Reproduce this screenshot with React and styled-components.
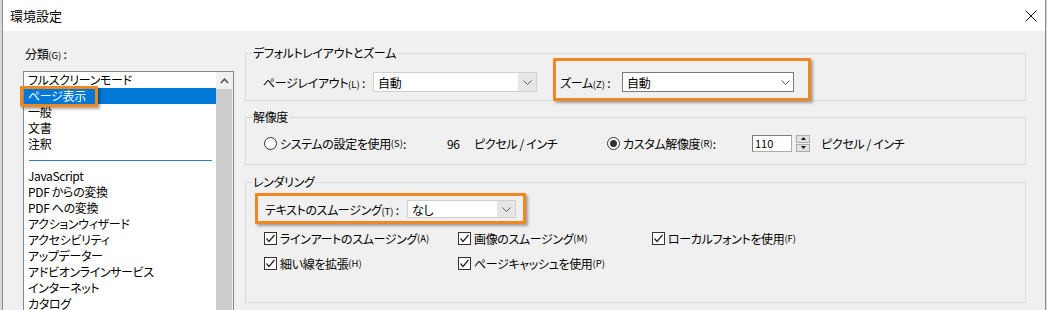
import React from 'react';
import styled, { createGlobalStyle } from 'styled-components';

const GlobalStyle = createGlobalStyle`
  *, *::before, *::after { box-sizing: border-box; }
  html, body { margin: 0; padding: 0; background: #d8d8d8; }
  body {
    font-family: "Noto Sans CJK JP", "Noto Sans", sans-serif;
    font-size: 12px;
    letter-spacing: -0.35px;
    color: #000;
    font-feature-settings: "palt";
  }
  #root { width: 1047px; height: 310px; overflow: hidden; }
`;

const Window = styled.div`
  margin-left: 2px;
  width: 1044px;
  height: 310px;
  border-left: 1px solid #8a8a8a;
  border-right: 1px solid #8a8a8a;
  display: flex;
  flex-direction: column;
  background: #f0f0f0;
  overflow: hidden;
`;

const TitleBar = styled.div`
  height: 31px;
  flex: none;
  background: #fff;
  display: flex;
  align-items: center;
  justify-content: space-between;
  padding: 0 8px 0 7px;
  font-size: 13px;
  letter-spacing: 0;
`;

const Body = styled.div`
  flex: 1;
  display: flex;
  min-height: 0;
`;

const Sidebar = styled.div`
  width: 242px;
  flex: none;
  padding: 15px 0 0 20px;
  display: flex;
  flex-direction: column;
`;

const Mn = styled.span`
  font-size: 9.5px;
  letter-spacing: 0;
`;

const SideLabel = styled.div`
  line-height: 16px;
  padding-left: 2px;
  margin-bottom: 8px;
`;

const ListBox = styled.div`
  width: 211px;
  flex: 1;
  display: flex;
  border: 1px solid #828790;
  border-bottom: none;
  background: #fff;
`;

const Items = styled.div`
  flex: 1;
  display: flex;
  flex-direction: column;
`;

const Item = styled.div`
  height: 16px;
  line-height: 16px;
  padding-left: 4px;
  white-space: nowrap;
  background: ${(p) => (p.$selected ? '#0078d7' : 'transparent')};
  color: ${(p) => (p.$selected ? '#fff' : '#000')};
`;

const Separator = styled.div`
  height: 16px;
  padding-top: 8px;
  margin: 0 4px 0 5px;
  &::after {
    content: '';
    display: block;
    height: 1px;
    background: #2b7bc0;
  }
`;

const ScrollBar = styled.div`
  width: 17px;
  flex: none;
  display: flex;
  flex-direction: column;
  background: #f0f0f0;
`;

const ScrollButton = styled.div`
  height: 17px;
  display: flex;
  align-items: center;
  justify-content: center;
`;

const Thumb = styled.div`
  flex: 1;
  margin: 0 1px 0 0;
  background: #cdcdcd;
`;

const Main = styled.div`
  flex: 1;
  padding: 14px 19px 0 0;
  display: flex;
  flex-direction: column;
`;

const Group = styled.fieldset`
  margin: ${(p) => p.$gap || 0}px 0 0 0;
  padding: 0;
  border: 1px solid #d9d9d9;
  min-width: 0;
`;

const Legend = styled.legend`
  margin-left: 6px;
  padding: 0 1px;
  line-height: 16px;
`;

const GroupContent = styled.div`
  padding: ${(p) => p.$pad};
  display: flex;
  flex-direction: column;
`;

const Row = styled.div`
  display: flex;
  align-items: center;
  height: ${(p) => p.$h || 20}px;
  white-space: nowrap;
`;

const Label = styled.span`
  width: ${(p) => (p.$w ? `${p.$w}px` : 'auto')};
  margin-left: ${(p) => p.$ml || 0}px;
  flex: none;
  white-space: nowrap;
`;

const Highlight = styled.div`
  position: relative;
  display: flex;
  align-items: center;
  margin-left: ${(p) => p.$ml || 0}px;
  &::after {
    content: '';
    position: absolute;
    top: ${(p) => p.$t}px;
    left: ${(p) => p.$l}px;
    right: ${(p) => p.$r}px;
    bottom: ${(p) => p.$b}px;
    border: 3px solid #ef8820;
    border-radius: 1px;
    box-shadow: 2px 2px 3px rgba(0, 0, 0, 0.35);
    pointer-events: none;
  }
`;

const InlineHighlight = styled.span`
  position: relative;
  display: inline-block;
  &::after {
    content: '';
    position: absolute;
    top: -2px;
    left: -8px;
    right: -12px;
    bottom: -3px;
    border: 3px solid #ef8820;
    border-radius: 1px;
    box-shadow: 2px 2px 3px rgba(0, 0, 0, 0.35);
  }
`;

const Select = styled.div`
  width: ${(p) => p.$w}px;
  height: ${(p) => p.$h || 20}px;
  flex: none;
  display: flex;
  background: #fff;
  border: 1px solid ${(p) => (p.$editable ? '#d0d0d0' : '#7a7a7a')};
`;

const SelectText = styled.div`
  flex: 1;
  padding-left: 4px;
  display: flex;
  align-items: center;
`;

const SelectArrow = styled.div`
  width: ${(p) => (p.$editable ? 18 : 16)}px;
  flex: none;
  display: flex;
  align-items: center;
  justify-content: center;
  background: ${(p) => (p.$editable ? '#e6e6e6' : '#fff')};
`;

const Radio = styled.span`
  width: 13px;
  height: 13px;
  flex: none;
  border-radius: 50%;
  border: 1px solid #333;
  background: #fff;
  display: flex;
  align-items: center;
  justify-content: center;
  margin-right: 3px;
  &::after {
    content: '';
    width: 7px;
    height: 7px;
    border-radius: 50%;
    background: ${(p) => (p.$checked ? '#333' : 'transparent')};
  }
`;

const Option = styled.div`
  display: flex;
  align-items: center;
  width: ${(p) => p.$w}px;
  flex: none;
`;

const NumberInput = styled.div`
  width: 40px;
  height: 17px;
  flex: none;
  background: #fff;
  border: 1px solid #adadad;
  border-top-color: #7a7a7a;
  border-left-color: #7a7a7a;
  padding-left: 2px;
  font-size: 11px;
  line-height: 15px;
  letter-spacing: 0;
`;

const Spin = styled.div`
  width: 14px;
  height: 17px;
  margin-left: 4px;
  flex: none;
  display: flex;
  flex-direction: column;
  gap: 1px;
`;

const SpinBtn = styled.div`
  flex: 1;
  background: #e1e1e1;
  border: 1px solid #adadad;
  display: flex;
  align-items: center;
  justify-content: center;
`;

const CheckGrid = styled.div`
  display: grid;
  grid-template-columns: repeat(3, 194px);
  grid-auto-rows: 18px;
  row-gap: 7px;
  margin-top: 11px;
`;

const Check = styled.div`
  display: flex;
  align-items: center;
  white-space: nowrap;
`;

const CheckBox = styled.span`
  width: 13px;
  height: 13px;
  flex: none;
  border: 1px solid #333;
  background: #fff;
  margin-right: 3px;
  display: flex;
  align-items: center;
  justify-content: center;
`;

const Chevron = () => (
  <svg width="9" height="5" viewBox="0 0 9 5">
    <polyline points="0.5,0.5 4.5,4.5 8.5,0.5" fill="none" stroke="#606060" strokeWidth="1" />
  </svg>
);

const CheckMark = () => (
  <svg width="11" height="11" viewBox="0 0 11 11">
    <polyline points="1.5,5.5 4,8.5 9.5,2" fill="none" stroke="#222" strokeWidth="1.2" />
  </svg>
);

const Tri = ({ up }) => (
  <svg width="5" height="3" viewBox="0 0 5 3">
    <polygon points={up ? '0,3 5,3 2.5,0' : '0,0 5,0 2.5,3'} fill="#111" />
  </svg>
);

const CloseIcon = () => (
  <svg width="12" height="12" viewBox="0 0 12 12">
    <path d="M0.5 0.5 L11.5 11.5 M11.5 0.5 L0.5 11.5" stroke="#111" strokeWidth="1" />
  </svg>
);

const UpArrow = () => (
  <svg width="9" height="6" viewBox="0 0 9 6">
    <polyline points="0.8,5 4.5,1.2 8.2,5" fill="none" stroke="#555" strokeWidth="1.6" />
  </svg>
);

const topItems = ['フルスクリーンモード', 'ページ表示', '一般', '文書', '注釈'];
const moreItems = [
  'JavaScript',
  'PDF からの変換',
  'PDF への変換',
  'アクションウィザード',
  'アクセシビリティ',
  'アップデーター',
  'アドビオンラインサービス',
  'インターネット',
  'カタログ',
];

const CheckItem = ({ text, mn }) => (
  <Check>
    <CheckBox>
      <CheckMark />
    </CheckBox>
    {text}
    <Mn>{mn}</Mn>
  </Check>
);

export default function App() {
  return (
    <>
      <GlobalStyle />
      <Window>
        <TitleBar>
          <span>環境設定</span>
          <CloseIcon />
        </TitleBar>
        <Body>
          <Sidebar>
            <SideLabel>
              分類<Mn>(G)</Mn> :
            </SideLabel>
            <ListBox>
              <Items>
                {topItems.map((t) => (
                  <Item key={t} $selected={t === 'ページ表示'}>
                    {t === 'ページ表示' ? <InlineHighlight>{t}</InlineHighlight> : t}
                  </Item>
                ))}
                <Separator />
                {moreItems.map((t) => (
                  <Item key={t}>{t}</Item>
                ))}
              </Items>
              <ScrollBar>
                <ScrollButton>
                  <UpArrow />
                </ScrollButton>
                <Thumb />
              </ScrollBar>
            </ListBox>
          </Sidebar>
          <Main>
            <Group>
              <Legend>デフォルトレイアウトとズーム</Legend>
              <GroupContent $pad="11px 0 8px 17px">
                <Row>
                  <Label $w={110}>
                    ページレイアウト<Mn>(L)</Mn> :
                  </Label>
                  <Select $w={164} $editable>
                    <SelectText>自動</SelectText>
                    <SelectArrow $editable>
                      <Chevron />
                    </SelectArrow>
                  </Select>
                  <Highlight $ml={23} $t={-14} $l={-7} $r={-17} $b={-9}>
                    <Label $w={62}>
                      ズーム<Mn>(Z)</Mn> :
                    </Label>
                    <Select $w={172}>
                      <SelectText>自動</SelectText>
                      <SelectArrow>
                        <Chevron />
                      </SelectArrow>
                    </Select>
                  </Highlight>
                </Row>
              </GroupContent>
            </Group>
            <Group $gap={8}>
              <Legend>解像度</Legend>
              <GroupContent $pad="8px 0 11px 18px">
                <Row>
                  <Option $w={183}>
                    <Radio />
                    システムの設定を使用<Mn>(S)</Mn> :
                  </Option>
                  <Label $w={27}>96</Label>
                  <Label $w={133}>ピクセル / インチ</Label>
                  <Option $w={145}>
                    <Radio $checked />
                    カスタム解像度<Mn>(R)</Mn> :
                  </Option>
                  <NumberInput>110</NumberInput>
                  <Spin>
                    <SpinBtn>
                      <Tri up />
                    </SpinBtn>
                    <SpinBtn>
                      <Tri />
                    </SpinBtn>
                  </Spin>
                  <Label $ml={11}>ピクセル / インチ</Label>
                </Row>
              </GroupContent>
            </Group>
            <Group $gap={9}>
              <Legend>レンダリング</Legend>
              <GroupContent $pad="10px 0 30px 18px">
                <Row $h={18}>
                  <Highlight $ml={1} $t={-7} $l={-10} $r={-10} $b={-6}>
                    <Label $w={142}>
                      テキストのスムージング<Mn>(T)</Mn> :
                    </Label>
                    <Select $w={109} $h={18} $editable>
                      <SelectText>なし</SelectText>
                      <SelectArrow $editable>
                        <Chevron />
                      </SelectArrow>
                    </Select>
                  </Highlight>
                </Row>
                <CheckGrid>
                  <CheckItem text="ラインアートのスムージング" mn="(A)" />
                  <CheckItem text="画像のスムージング" mn="(M)" />
                  <CheckItem text="ローカルフォントを使用" mn="(F)" />
                  <CheckItem text="細い線を拡張" mn="(H)" />
                  <CheckItem text="ページキャッシュを使用" mn="(P)" />
                </CheckGrid>
              </GroupContent>
            </Group>
          </Main>
        </Body>
      </Window>
    </>
  );
}
